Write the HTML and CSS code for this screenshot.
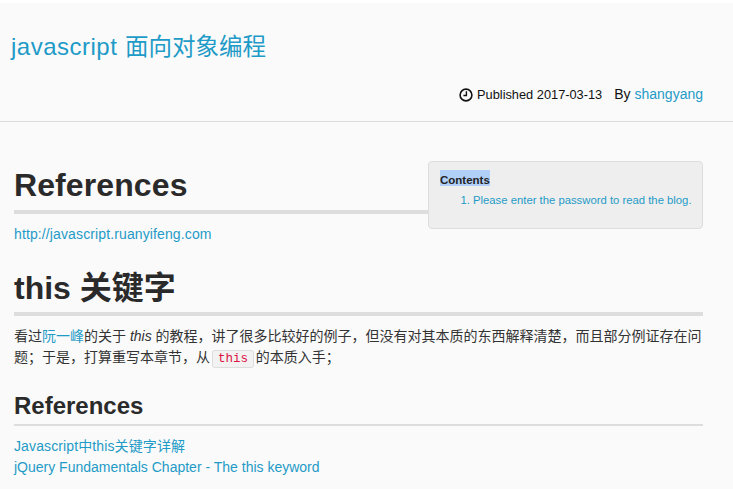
FILE: index.html
```html
<!DOCTYPE html>
<html lang="zh">
<head>
<meta charset="utf-8">
<title>javascript 面向对象编程</title>
<link rel="stylesheet" href="styles.css">
</head>
<body>
<header class="site-header">
  <h1 class="post-title"><a href="#"><span class="title-latin">javascript</span> <span class="title-cjk">面向对象编程</span></a></h1>
  <div class="post-meta">
    <span class="published">
      <svg class="clock" viewBox="0 0 14 14" width="14" height="14" aria-hidden="true"><circle cx="7" cy="7" r="5.9" fill="none" stroke="#111" stroke-width="1.6"/><path d="M7.4 3.2V7.5H4.4" fill="none" stroke="#111" stroke-width="1.4"/></svg>
      <span class="published-text">Published 2017-03-13</span>
    </span>
    <span class="author">By <a href="#">shangyang</a></span>
  </div>
</header>
<main class="content">
  <aside class="toc">
    <div class="toc-title"><span class="selected">Contents</span></div>
    <ol class="toc-list"><li><a href="#">Please enter the password to read the blog.</a></li></ol>
  </aside>
  <h2 class="major first">References</h2>
  <p class="line"><a class="wide" href="#">http://javascript.ruanyifeng.com</a></p>
  <h2 class="major">this 关键字</h2>
  <p class="para">看过<a href="#">阮一峰</a>的关于 <em>this</em> 的教程，讲了很多比较好的例子，但没有对其本质的东西解释清楚，而且部分例证存在问题；于是，打算重写本章节，从 <code>this</code> 的本质入手；</p>
  <h3 class="minor">References</h3>
  <p class="line"><a class="wide" href="#">Javascript中this关键字详解</a></p>
  <p class="line"><a href="#">jQuery Fundamentals Chapter - The this keyword</a></p>
</main>
</body>
</html>
```
FILE: styles.css
```css
html, body { margin: 0; padding: 0; }
body {
  background: #fafafa;
  color: #333;
  font-family: "Liberation Sans", "Noto Sans CJK SC", sans-serif;
  font-size: 14px;
  line-height: 21px;
  height: 489px;
  overflow: hidden;
  border-top: 3px solid #fff;
  box-sizing: border-box;
}
a { color: #1f9bc7; text-decoration: none; }
.site-header {
  height: 119px;
  box-sizing: border-box;
  border-bottom: 1px solid #ddd;
  padding: 0 30px 0 11px;
  display: flex;
  flex-direction: column;
}
.post-title { margin: 28px 0 0; font-size: 24px; line-height: 32px; font-weight: 400; }
.title-latin { letter-spacing: 0.5px; margin-right: 1px; }
.title-cjk { font-size: 23.5px; }
.post-meta {
  margin-top: 21px;
  display: flex;
  justify-content: flex-end;
  align-items: center;
  gap: 12px;
  color: #111;
}
.published { display: flex; align-items: center; gap: 4px; }
.published-text { font-size: 12.8px; }
.author { font-size: 14px; }
.clock { display: block; }
.content { padding: 39px 30px 0 14px; }
.toc {
  float: right;
  width: 275px;
  height: 68px;
  box-sizing: border-box;
  background: #eee;
  border: 1px solid #ddd;
  border-radius: 4px;
  padding: 8px 11px;
  margin-left: 20px;
  font-size: 11.3px;
  line-height: 20px;
}
.toc-title { font-weight: 700; font-size: 11.5px; line-height: 12px; color: #222; margin-bottom: 4px; }
.selected { background: #b0d0f8; display: block; width: fit-content; padding-top: 4px; }
.toc-list { margin: 0; padding: 0 0 0 33px; color: #1f9bc7; }
.toc-list li { white-space: nowrap; }
.major {
  margin: 21px 0 10px;
  font-size: 32px;
  line-height: 44px;
  font-weight: 700;
  color: #2a2a2a;
  border-bottom: 4px solid #ddd;
  padding-bottom: 2px;
}
.first { margin-top: 0; padding-top: 2px; padding-bottom: 3px; letter-spacing: 0.1px; }
.line { margin: 0; }
.wide { letter-spacing: 0.12px; }
.para { margin: 0 0 22px; }
.minor {
  margin: 0 0 10px;
  font-size: 24px;
  line-height: 32px;
  font-weight: 700;
  color: #2a2a2a;
  border-bottom: 2px solid #ddd;
  padding-bottom: 2px;
}
em { font-style: italic; }
code {
  font-family: "Liberation Mono", monospace;
  font-size: 12.5px;
  line-height: 1;
  color: #d14;
  background: #f2f2f2;
  border: 1px solid #ddd;
  border-radius: 3px;
  padding: 1px 5px;
  margin: 0 -2px;
}
```
